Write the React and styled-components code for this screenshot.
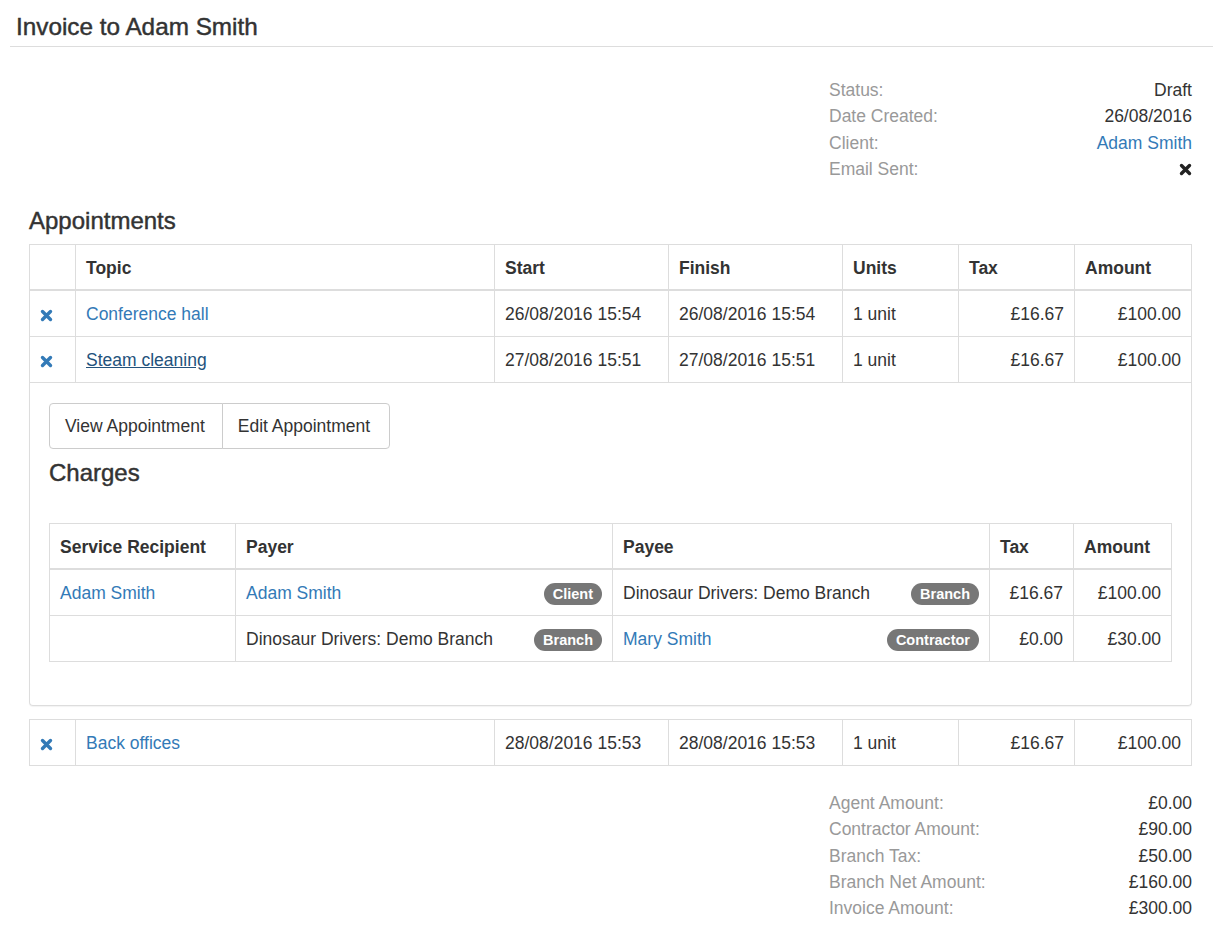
import React from "react";
import styled, { createGlobalStyle } from "styled-components";

const Global = createGlobalStyle`
  html, body { margin: 0; padding: 0; background: #fff; }
  body {
    font-family: "Liberation Sans", Arial, Helvetica, sans-serif;
    font-size: 17.5px;
    color: #333;
  }
  * { box-sizing: border-box; }
`;

const Header = styled.header`
  margin: 0 10px;
  padding: 14px 6px 6px;
  border-bottom: 1px solid #ddd;
`;

const Title = styled.h1`
  margin: 0;
  font-size: 24.3px;
  line-height: 26px;
  font-weight: 500;
  color: #333;
  -webkit-text-stroke: 0.45px #333;
`;

const Content = styled.main`
  padding: 0 31px 20px 29px;
`;

const InfoList = styled.dl`
  width: 363px;
  margin: ${(p) => p.$top}px 0 0 auto;
  display: grid;
  grid-template-columns: 1fr auto;
  line-height: 26.3px;
`;

const Label = styled.dt`
  color: #999;
  margin: 0;
`;

const Value = styled.dd`
  margin: 0;
  text-align: right;
  display: flex;
  justify-content: flex-end;
  align-items: center;
`;

const Link = styled.a`
  color: ${(p) => (p.$active ? "#23527c" : "#337ab7")};
  text-decoration: ${(p) => (p.$active ? "underline" : "none")};
  cursor: pointer;
`;

const SectionTitle = styled.h2`
  margin: ${(p) => p.$top}px 0 ${(p) => p.$bottom}px;
  font-size: 24px;
  line-height: 26px;
  font-weight: 500;
  color: #333;
  -webkit-text-stroke: 0.45px #333;
`;

const Table = styled.table`
  width: ${(p) => p.$width || "100%"};
  border-collapse: collapse;
  table-layout: fixed;
  margin: ${(p) => p.$top || 0}px 0 ${(p) => p.$bottom || 0}px;
`;

const Th = styled.th`
  border: 1px solid #ddd;
  border-bottom: 2px solid #ddd;
  padding: 11px 10px 8px;
  line-height: 25px;
  font-weight: bold;
  text-align: left;
  vertical-align: bottom;
`;

const Td = styled.td`
  border: 1px solid #ddd;
  padding: 11px 10px 9px;
  line-height: 25px;
  text-align: ${(p) => (p.$right ? "right" : "left")};
  vertical-align: middle;
  white-space: nowrap;
`;

const Split = styled.div`
  display: flex;
  justify-content: space-between;
  align-items: center;
`;

const Badge = styled.span`
  display: inline-block;
  background: #777;
  color: #fff;
  font-weight: bold;
  font-size: 14.5px;
  line-height: 22px;
  height: 22px;
  padding: 0 9px;
  border-radius: 11px;
`;

const Panel = styled.div`
  border: 1px solid #ddd;
  border-top: none;
  border-radius: 0 0 4px 4px;
  box-shadow: 0 1px 1px rgba(0, 0, 0, 0.05);
  padding: 20px 19px 20px;
`;

const ButtonGroup = styled.div`
  display: inline-flex;
`;

const Button = styled.button`
  font-family: inherit;
  font-size: 17.5px;
  color: #333;
  background: #fff;
  border: 1px solid #ccc;
  line-height: 24px;
  height: 46px;
  padding: 0 ${(p) => p.$padR}px 0 ${(p) => p.$padL}px;
  cursor: pointer;
  &:first-child { border-radius: 4px 0 0 4px; }
  &:last-child { border-radius: 0 4px 4px 0; margin-left: -1px; }
`;

const IconWrap = styled.span`
  display: inline-flex;
  color: ${(p) => p.$color};
  vertical-align: middle;
`;

const RemoveIcon = ({ color = "#337ab7" }) => (
  <IconWrap $color={color}>
    <svg width="13" height="13" viewBox="0 0 13 13">
      <path
        d="M2.5 2.5 L10.5 10.5 M10.5 2.5 L2.5 10.5"
        stroke="currentColor"
        strokeWidth="3.4"
        strokeLinecap="round"
      />
    </svg>
  </IconWrap>
);

const AppCols = () => (
  <colgroup>
    <col style={{ width: 46 }} />
    <col style={{ width: 419 }} />
    <col style={{ width: 174 }} />
    <col style={{ width: 174 }} />
    <col style={{ width: 116 }} />
    <col style={{ width: 116 }} />
    <col style={{ width: 117 }} />
  </colgroup>
);

const AppRow = ({ topic, start, finish, active }) => (
  <tr>
    <Td><RemoveIcon /></Td>
    <Td><Link $active={active}>{topic}</Link></Td>
    <Td>{start}</Td>
    <Td>{finish}</Td>
    <Td>1 unit</Td>
    <Td $right>£16.67</Td>
    <Td $right>£100.00</Td>
  </tr>
);

const totals = [
  ["Agent Amount:", "£0.00"],
  ["Contractor Amount:", "£90.00"],
  ["Branch Tax:", "£50.00"],
  ["Branch Net Amount:", "£160.00"],
  ["Invoice Amount:", "£300.00"],
];

export default function App() {
  return (
    <>
      <Global />
      <Header>
        <Title>Invoice to Adam Smith</Title>
      </Header>
      <Content>
        <InfoList $top={30}>
          <Label>Status:</Label>
          <Value>Draft</Value>
          <Label>Date Created:</Label>
          <Value>26/08/2016</Value>
          <Label>Client:</Label>
          <Value><Link>Adam Smith</Link></Value>
          <Label>Email Sent:</Label>
          <Value><RemoveIcon color="#222" /></Value>
        </InfoList>

        <SectionTitle $top={26} $bottom={10}>Appointments</SectionTitle>
        <Table $width="1162px">
          <AppCols />
          <thead>
            <tr>
              <Th></Th>
              <Th>Topic</Th>
              <Th>Start</Th>
              <Th>Finish</Th>
              <Th>Units</Th>
              <Th>Tax</Th>
              <Th>Amount</Th>
            </tr>
          </thead>
          <tbody>
            <AppRow topic="Conference hall" start="26/08/2016 15:54" finish="26/08/2016 15:54" />
            <AppRow topic="Steam cleaning" start="27/08/2016 15:51" finish="27/08/2016 15:51" active />
          </tbody>
        </Table>

        <Panel>
          <ButtonGroup>
            <Button $padL={15} $padR={17}>View Appointment</Button>
            <Button $padL={15} $padR={19}>Edit Appointment</Button>
          </ButtonGroup>
          <SectionTitle $top={11} $bottom={37}>Charges</SectionTitle>
          <Table $bottom={23}>
            <colgroup>
              <col style={{ width: 186 }} />
              <col style={{ width: 377 }} />
              <col style={{ width: 377 }} />
              <col style={{ width: 84 }} />
              <col style={{ width: 98 }} />
            </colgroup>
            <thead>
              <tr>
                <Th>Service Recipient</Th>
                <Th>Payer</Th>
                <Th>Payee</Th>
                <Th>Tax</Th>
                <Th>Amount</Th>
              </tr>
            </thead>
            <tbody>
              <tr>
                <Td><Link>Adam Smith</Link></Td>
                <Td>
                  <Split><Link>Adam Smith</Link><Badge>Client</Badge></Split>
                </Td>
                <Td>
                  <Split><span>Dinosaur Drivers: Demo Branch</span><Badge>Branch</Badge></Split>
                </Td>
                <Td $right>£16.67</Td>
                <Td $right>£100.00</Td>
              </tr>
              <tr>
                <Td></Td>
                <Td>
                  <Split><span>Dinosaur Drivers: Demo Branch</span><Badge>Branch</Badge></Split>
                </Td>
                <Td>
                  <Split><Link>Mary Smith</Link><Badge>Contractor</Badge></Split>
                </Td>
                <Td $right>£0.00</Td>
                <Td $right>£30.00</Td>
              </tr>
            </tbody>
          </Table>
        </Panel>

        <Table $top={13} $width="1162px">
          <AppCols />
          <tbody>
            <AppRow topic="Back offices" start="28/08/2016 15:53" finish="28/08/2016 15:53" />
          </tbody>
        </Table>

        <InfoList $top={24}>
          {totals.map(([l, v]) => (
            <React.Fragment key={l}>
              <Label>{l}</Label>
              <Value>{v}</Value>
            </React.Fragment>
          ))}
        </InfoList>
      </Content>
    </>
  );
}
